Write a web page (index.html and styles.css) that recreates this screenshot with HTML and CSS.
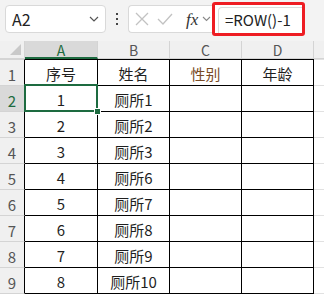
FILE: index.html
```html
<!DOCTYPE html>
<html>
<head>
<meta charset="utf-8">
<link rel="stylesheet" href="styles.css">
</head>
<body>
<div class="app">
  <div class="toolbar">
    <div class="namebox">
      <span class="name">A2</span>
      <svg class="chev" width="10" height="6" viewBox="0 0 10 6"><path d="M1 1 L5 5 L9 1" fill="none" stroke="#555" stroke-width="1.2"/></svg>
    </div>
    <div class="dots"><i></i><i></i><i></i></div>
    <div class="fxbox">
      <svg class="ico" width="16" height="16" viewBox="0 0 16 16"><path d="M2 2 L14 14 M14 2 L2 14" stroke="#c2c2c2" stroke-width="1.3" fill="none"/></svg>
      <svg class="ico ok" width="16" height="16" viewBox="0 0 16 16"><path d="M1 8 L6 13 L15 3" stroke="#c2c2c2" stroke-width="1.3" fill="none"/></svg>
      <span class="fx">fx</span>
      <svg class="chev2" width="9" height="6" viewBox="0 0 9 6"><path d="M1 1 L4.5 4.5 L8 1" fill="none" stroke="#888" stroke-width="1.1"/></svg>
    </div>
    <div class="redbox">
      <div class="formula">=ROW()-1</div>
    </div>
  </div>
  <div class="sheet">
    <div class="ch corner"><span class="tri"></span></div>
    <div class="ch sel">A</div>
    <div class="ch">B</div>
    <div class="ch">C</div>
    <div class="ch">D</div>
    <div class="ch rest"></div>

    <div class="rh first">1</div>
    <div class="c first">序号</div>
    <div class="c first">姓名</div>
    <div class="c first brown">性别</div>
    <div class="c first">年龄</div>
    <div class="e first"></div>

    <div class="rh rsel">2</div>
    <div class="c active">1</div>
    <div class="c">厕所1</div>
    <div class="c"></div>
    <div class="c"></div>
    <div class="e"></div>

    <div class="rh">3</div>
    <div class="c">2</div>
    <div class="c">厕所2</div>
    <div class="c"></div>
    <div class="c"></div>
    <div class="e"></div>

    <div class="rh">4</div>
    <div class="c">3</div>
    <div class="c">厕所3</div>
    <div class="c"></div>
    <div class="c"></div>
    <div class="e"></div>

    <div class="rh">5</div>
    <div class="c">4</div>
    <div class="c">厕所6</div>
    <div class="c"></div>
    <div class="c"></div>
    <div class="e"></div>

    <div class="rh">6</div>
    <div class="c">5</div>
    <div class="c">厕所7</div>
    <div class="c"></div>
    <div class="c"></div>
    <div class="e"></div>

    <div class="rh">7</div>
    <div class="c">6</div>
    <div class="c">厕所8</div>
    <div class="c"></div>
    <div class="c"></div>
    <div class="e"></div>

    <div class="rh">8</div>
    <div class="c">7</div>
    <div class="c">厕所9</div>
    <div class="c"></div>
    <div class="c"></div>
    <div class="e"></div>

    <div class="rh">9</div>
    <div class="c">8</div>
    <div class="c">厕所10</div>
    <div class="c"></div>
    <div class="c"></div>
    <div class="e"></div>
  </div>
</div>
</body>
</html>
```

FILE: styles.css
```css
html, body {
  margin: 0;
  padding: 0;
}
body {
  width: 324px;
  height: 297px;
  overflow: hidden;
  background: #ffffff;
  font-family: "Noto Sans CJK SC", "Microsoft YaHei", sans-serif;
  color: #1f1f1f;
}
.app {
  width: 324px;
  height: 297px;
  overflow: hidden;
}
.toolbar {
  height: 41px;
  box-sizing: border-box;
  padding: 0 0 3px 5px;
  background: #f3f3f3;
  display: flex;
  align-items: center;
}
.namebox {
  width: 101px;
  height: 28px;
  box-sizing: border-box;
  background: #fff;
  border: 1px solid #d9d9d9;
  border-radius: 4px;
  display: flex;
  align-items: center;
  padding: 0 6px 0 6px;
}
.name {
  flex: 1;
  font-size: 16px;
  color: #222;
  line-height: 1;
}
.chev {
  display: block;
}
.dots {
  margin-left: 10px;
  width: 3px;
  display: flex;
  flex-direction: column;
  gap: 3px;
}
.dots i {
  display: block;
  width: 2px;
  height: 2px;
  background: #444;
}
.fxbox {
  margin-left: 9px;
  width: 84px;
  height: 28px;
  box-sizing: border-box;
  background: #fff;
  border: 1px solid #d9d9d9;
  border-right: none;
  border-radius: 4px 0 0 4px;
  display: flex;
  align-items: center;
  padding-left: 5px;
}
.ico {
  display: block;
}
.ok {
  margin-left: 7px;
}
.fx {
  margin-left: 13px;
  font-family: "Liberation Serif", serif;
  font-style: italic;
  font-size: 17px;
  color: #333;
  line-height: 1;
}
.chev2 {
  margin-left: 4px;
  display: block;
}
.redbox {
  width: 93px;
  height: 34px;
  box-sizing: border-box;
  border: 3px solid #ee1d23;
  border-radius: 3px;
  background: #fff;
  padding: 2px 0 0 3px;
}
.formula {
  height: 100%;
  box-sizing: border-box;
  border-left: 1px solid #dcdcdc;
  border-top: 1px solid #dcdcdc;
  border-radius: 4px 0 0 0;
  padding-left: 6px;
  font-size: 15px;
  line-height: 24px;
  color: #222;
}
.sheet {
  display: grid;
  grid-template-columns: 25px 73px 72px 72px 72px 1fr;
  grid-template-rows: 18px 27px repeat(8, 26px);
}
.ch {
  background: #f0f0f0;
  box-sizing: border-box;
  border-right: 1px solid #d4d4d4;
  border-bottom: 1px solid #d4d4d4;
  font-size: 14px;
  color: #555;
  display: flex;
  align-items: center;
  justify-content: center;
  line-height: 1;
  padding-top: 1px;
}
.ch.sel {
  background: #d9d9d9;
  color: #1d6b40;
  border-bottom: 2px solid #1d6b40;
}
.ch.rest {
  border-right: none;
}
.corner {
  position: relative;
}
.tri {
  position: absolute;
  right: 3px;
  bottom: 3px;
  width: 0;
  height: 0;
  border-left: 11px solid transparent;
  border-bottom: 11px solid #c9c9c9;
}
.rh {
  background: #f0f0f0;
  box-sizing: border-box;
  border-right: 1px solid #000;
  border-bottom: 1px solid #d4d4d4;
  font-size: 15px;
  color: #555;
  display: flex;
  align-items: flex-end;
  justify-content: center;
  padding-bottom: 1px;
  line-height: 1.2;
}
.rh.first {
  border-top: 1px solid #d4d4d4;
}
.rh.rsel {
  background: #d9d9d9;
  color: #1d6b40;
}
.c {
  box-sizing: border-box;
  border-right: 1px solid #000;
  border-bottom: 1px solid #000;
  font-size: 15px;
  display: flex;
  align-items: center;
  justify-content: center;
  padding-top: 2px;
  line-height: 1;
  color: #1f1f1f;
}
.c.first {
  border-top: 1px solid #000;
}
.brown {
  color: #7a4b25;
}
.e {
  box-sizing: border-box;
  border-bottom: 1px solid #e1e1e1;
}
.e.first {
  border-top: 1px solid #e1e1e1;
}
.active {
  position: relative;
}
.active::after {
  content: "";
  position: absolute;
  top: -2px;
  left: -1px;
  right: -1px;
  bottom: -1px;
  border: 2px solid #1d6b40;
  z-index: 2;
}
.active::before {
  content: "";
  position: absolute;
  right: -4px;
  bottom: -4px;
  width: 5px;
  height: 5px;
  background: #1d6b40;
  border: 1px solid #fff;
  z-index: 3;
}
```
